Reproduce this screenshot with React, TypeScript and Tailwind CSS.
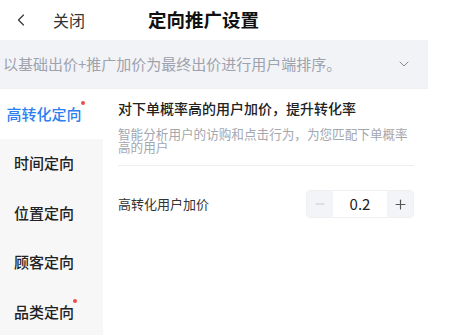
import { ChevronLeft, ChevronDown, Minus, Plus } from 'lucide-react'

const TABS = [
  { name: '高转化定向', dot: true },
  { name: '时间定向', dot: false },
  { name: '位置定向', dot: false },
  { name: '顾客定向', dot: false },
  { name: '品类定向', dot: true },
]

export default function App() {
  const active = 0

  return (
    <div
      className="w-[450px] h-[335px] bg-white overflow-hidden text-[#222]"
      style={{ fontFamily: '"Noto Sans CJK SC", "Noto Sans", sans-serif' }}
    >
      <div className="w-[428px]">
        {/* header */}
        <div className="h-[40px] flex items-center relative">
          <ChevronLeft className="ml-[11px] w-[20px] h-[20px] text-[#333]" strokeWidth={1.4} />
          <span className="ml-[22px] text-[16px] text-[#333]">关闭</span>
          <span className="absolute left-[148px] text-[18.5px] font-bold text-[#111]">定向推广设置</span>
        </div>

        {/* info bar */}
        <div className="h-[48px] bg-[#f2f3f7] flex items-center justify-between pl-[3px] pr-[16px]">
          <span className="text-[15px] text-[#9ea2ad]">以基础出价+推广加价为最终出价进行用户端排序。</span>
          <ChevronDown className="w-[16px] h-[16px] text-[#888]" strokeWidth={1.5} />
        </div>

        <div className="flex h-[247px] border-t border-[#f0f0f0]">
          {/* sidebar */}
          <div className="w-[103px] bg-[#f7f7f7]">
            {TABS.map((t, i) => (
              <div
                key={t.name}
                className={`h-[49.5px] flex items-center justify-center pr-[15px] ${i === active ? 'bg-white text-[#2e7ff0]' : 'text-[#222]'}`}
              >
                <span className="relative text-[15px] font-medium">
                  {t.name}
                  {t.dot && <span className="absolute -right-[3px] -top-[2px] w-[4px] h-[4px] rounded-full bg-[#f04a4a]" />}
                </span>
              </div>
            ))}
          </div>

          {/* content */}
          <div className="flex-1 bg-white pl-[15px] pr-[14px] pt-[9px]">
            <p className="text-[14px] leading-[20px] font-medium text-[#222]">对下单概率高的用户加价，提升转化率</p>
            <p className="mt-[9px] text-[12.6px] leading-[13px] text-[#a3a7b0]">
              智能分析用户的访购和点击行为，为您匹配下单概率高的用户
            </p>
            <div className="mt-[12px] h-px bg-[#eeeeee]" />
            <div className="mt-[24px] flex items-center justify-between">
              <span className="text-[13px] text-[#333]">高转化用户加价</span>
              <div className="flex h-[28px] rounded-[4px] border border-[#f0f0f2] overflow-hidden">
                <div className="w-[26px] bg-[#f3f4f7] flex items-center justify-center">
                  <Minus className="w-[14px] h-[14px] text-[#c4c7cf]" strokeWidth={1.6} />
                </div>
                <div className="w-[54px] bg-white flex items-center justify-center text-[15px] text-[#222]">0.2</div>
                <div className="w-[26px] bg-[#f3f4f7] flex items-center justify-center">
                  <Plus className="w-[15px] h-[15px] text-[#555]" strokeWidth={1.8} />
                </div>
              </div>
            </div>
          </div>
        </div>
      </div>
    </div>
  )
}
